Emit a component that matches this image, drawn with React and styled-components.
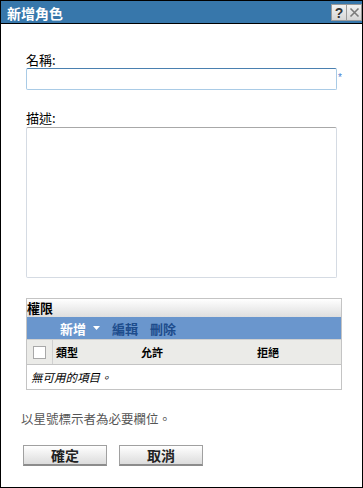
import React from 'react';
import styled, { createGlobalStyle } from 'styled-components';

const GlobalStyle = createGlobalStyle`
  html, body {
    margin: 0;
    padding: 0;
    background: #ffffff;
  }
  body {
    font-family: "Noto Sans CJK TC", "Liberation Sans", sans-serif;
  }
`;

const App = () => {
  return (
    <>
      <GlobalStyle />
      <StyledWindow>
        <StyledTitleBar>
          <StyledTitle>新增角色</StyledTitle>
          <StyledTitleButtons>
            <StyledTitleButton data="help">?</StyledTitleButton>
            <StyledTitleButton data="close">
              <svg width="11" height="11" viewBox="0 0 11 11">
                <path d="M1.5 1.5 L9.5 9.5 M9.5 1.5 L1.5 9.5" stroke="#7a7a7a" strokeWidth="1.6" />
              </svg>
            </StyledTitleButton>
          </StyledTitleButtons>
        </StyledTitleBar>

        <StyledBody>
          <StyledField>
            <StyledLabel>名稱:</StyledLabel>
            <StyledInputRow>
              <StyledInput type="text" />
              <StyledRequired>*</StyledRequired>
            </StyledInputRow>
          </StyledField>

          <StyledField>
            <StyledLabel>描述:</StyledLabel>
            <StyledTextarea />
          </StyledField>

          <StyledTable>
            <StyledTableTitle>權限</StyledTableTitle>
            <StyledToolbar>
              <StyledToolLink data="primary">
                新增
                <svg width="7" height="4" viewBox="0 0 7 4">
                  <path d="M0 0 L7 0 L3.5 4 Z" fill="#ffffff" />
                </svg>
              </StyledToolLink>
              <StyledToolLink>編輯</StyledToolLink>
              <StyledToolLink>刪除</StyledToolLink>
            </StyledToolbar>
            <StyledHeaderRow>
              <StyledCheckCell>
                <StyledCheckbox />
              </StyledCheckCell>
              <StyledHeaderCell>類型</StyledHeaderCell>
              <StyledHeaderCell>允許</StyledHeaderCell>
              <StyledHeaderCell>拒絕</StyledHeaderCell>
            </StyledHeaderRow>
            <StyledEmptyRow>無可用的項目。</StyledEmptyRow>
          </StyledTable>

          <StyledNote>以星號標示者為必要欄位。</StyledNote>

          <StyledActions>
            <StyledButton>確定</StyledButton>
            <StyledButton>取消</StyledButton>
          </StyledActions>
        </StyledBody>
      </StyledWindow>
    </>
  );
};

const StyledWindow = styled.div`
  width: 363px;
  height: 488px;
  box-sizing: border-box;
  border: 1px solid #000000;
  display: flex;
  flex-direction: column;
  background: #ffffff;
`;

const StyledTitleBar = styled.div`
  height: 22px;
  background: #3777ab;
  border-bottom: 1px solid #000000;
  display: flex;
  align-items: center;
  justify-content: space-between;
  padding-left: 6px;
  flex-shrink: 0;
`;

const StyledTitle = styled.span`
  color: #ffffff;
  font-size: 14px;
  font-weight: bold;
  line-height: 16px;
  margin-top: 2px;
`;

const StyledTitleButtons = styled.div`
  display: flex;
  align-items: center;
  margin-top: 1px;
`;

const StyledTitleButton = styled.div`
  width: 14px;
  height: 15px;
  border: 1px solid #9a9a9a;
  background: linear-gradient(#f2f2f2, #d6d6d6);
  display: flex;
  align-items: center;
  justify-content: center;
  font-family: "Liberation Sans", sans-serif;
  font-size: 14px;
  font-weight: bold;
  color: #333333;
  margin-left: ${({ data }) => (data === 'close' ? '-1px' : '0')};
`;

const StyledBody = styled.div`
  display: flex;
  flex-direction: column;
  padding: 28px 0 0 25px;
`;

const StyledField = styled.div`
  display: flex;
  flex-direction: column;
  margin-bottom: 20px;
`;

const StyledLabel = styled.label`
  font-size: 13px;
  line-height: 16px;
  color: #000000;
`;

const StyledInputRow = styled.div`
  display: flex;
  align-items: flex-start;
`;

const StyledInput = styled.input`
  width: 311px;
  height: 22px;
  box-sizing: border-box;
  margin: 0;
  border: 1px solid #a9cbe6;
  border-top-color: #4a80b0;
  border-radius: 2px;
  outline: none;
`;

const StyledRequired = styled.span`
  color: #4a7fd0;
  font-family: "Liberation Sans", sans-serif;
  font-size: 10px;
  line-height: 10px;
  margin: 5px 0 0 1px;
`;

const StyledTextarea = styled.textarea`
  width: 311px;
  height: 151px;
  box-sizing: border-box;
  margin: 1px 0 0;
  border: 1px solid #d5dbe3;
  border-top-color: #a8a8a8;
  border-radius: 2px;
  resize: none;
  outline: none;
`;

const StyledTable = styled.div`
  width: 316px;
  box-sizing: border-box;
  border: 1px solid #c4c4c4;
  display: flex;
  flex-direction: column;
`;

const StyledTableTitle = styled.div`
  height: 18px;
  background: linear-gradient(#ffffff, #dedede);
  font-size: 13px;
  font-weight: bold;
  line-height: 18px;
  color: #000000;
`;

const StyledToolbar = styled.div`
  height: 22px;
  background: #6a96cd;
  display: flex;
  align-items: center;
  gap: 12px;
  padding-left: 33px;
`;

const StyledToolLink = styled.span`
  display: flex;
  align-items: center;
  gap: 7px;
  font-size: 13px;
  font-weight: bold;
  color: ${({ data }) => (data === 'primary' ? '#ffffff' : '#1d4c8c')};
`;

const StyledHeaderRow = styled.div`
  height: 24px;
  background: #ebebe8;
  border-top: 1px solid #d0d0d0;
  border-bottom: 1px solid #c4c4c4;
  display: grid;
  grid-template-columns: 26px 85px 116px 1fr;
  align-items: center;
`;

const StyledCheckCell = styled.div`
  height: 100%;
  border-right: 1px solid #d0d0d0;
  display: flex;
  align-items: center;
  justify-content: center;
`;

const StyledCheckbox = styled.div`
  width: 11px;
  height: 11px;
  border: 1px solid #a8a8a8;
  background: #ffffff;
`;

const StyledHeaderCell = styled.div`
  padding-left: 3px;
  font-size: 11px;
  font-weight: bold;
  color: #000000;
`;

const StyledEmptyRow = styled.div`
  height: 24px;
  padding-left: 4px;
  display: flex;
  align-items: center;
  font-size: 11.5px;
  font-style: italic;
  color: #000000;
`;

const StyledNote = styled.div`
  margin: 21px 0 0 -5px;
  font-size: 12.5px;
  line-height: 16px;
  color: #555555;
`;

const StyledActions = styled.div`
  display: flex;
  gap: 12px;
  margin: 18px 0 0 -3px;
`;

const StyledButton = styled.button`
  width: 84px;
  height: 21px;
  box-sizing: border-box;
  margin: 0;
  padding: 0;
  border: 1px solid #a0a0a0;
  border-bottom: 2px solid #8c8c8c;
  background: linear-gradient(#ffffff, #dcdcdc);
  font-family: "Noto Sans CJK TC", "Liberation Sans", sans-serif;
  font-size: 14px;
  font-weight: bold;
  line-height: 17px;
  color: #222222;
`;

export default App;
